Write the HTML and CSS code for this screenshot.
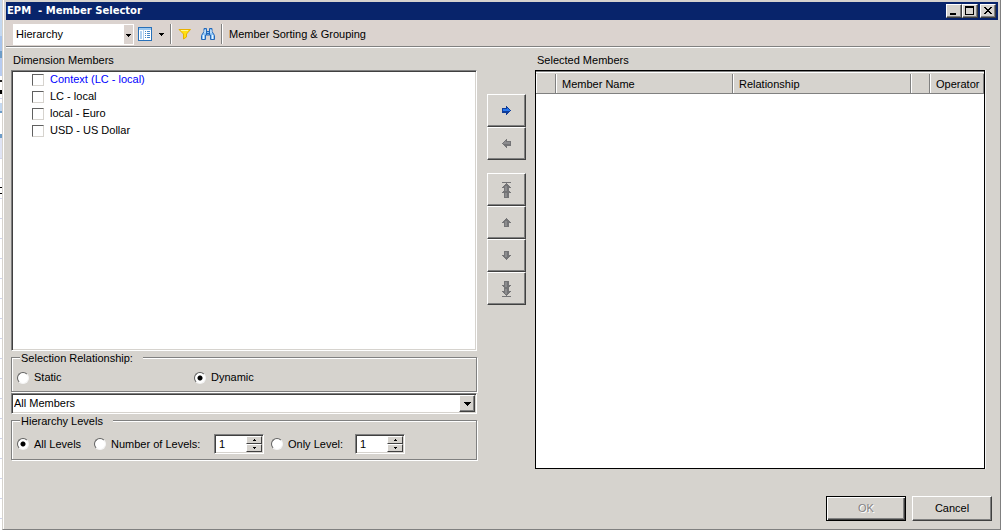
FILE: index.html
```html
<!DOCTYPE html>
<html lang="en">
<head>
<meta charset="utf-8">
<title>EPM - Member Selector</title>
<link rel="stylesheet" href="styles.css">
</head>
<body>
<div class="sheet-edge"></div>
<main class="window">
  <header class="titlebar">
    <h1 class="title">EPM&nbsp; - Member Selector</h1>
    <button class="caption-btn" aria-label="Minimize"><svg width="14" height="12" shape-rendering="crispEdges"><path d="M3 8h6v2H3z"/></svg></button>
    <button class="caption-btn" aria-label="Maximize"><svg width="14" height="12" shape-rendering="crispEdges"><path fill-rule="evenodd" d="M2 1h9v9H2zM3 3v6h7V3z"/></svg></button>
    <button class="caption-btn caption-close" aria-label="Close"><svg width="14" height="12" shape-rendering="crispEdges"><path d="M3 2h2v1h1v1h2V3h1V2h2v1h-1v1H9v1H8v1h1v1h1v1h1v1H9V8H8V7H6v1H5v1H3V8h1V7h1V6h1V5H5V4H4V3H3z"/></svg></button>
  </header>
  <nav class="toolbar" aria-label="Toolbar">
    <div class="view-combo">
      <select class="view-select" aria-label="View"><option>Hierarchy</option></select>
      <svg class="view-arrow" width="9" height="19" shape-rendering="crispEdges"><path d="M2 9h5v1H6v1H5v1H4v-1H3v-1H2z"/></svg>
    </div>
    <button class="tool tool-layout" aria-label="Layout">
      <svg width="14" height="14" shape-rendering="crispEdges"><path fill="#2870b8" d="M0 0h14v14H0z"/><path fill="#9cc8f0" d="M1 1h12v2H1z"/><path fill="#fff" d="M1 3h4v10H1zM5 3h8v10H5z"/><path fill="#b0d0f0" d="M2 4h2v8H2zM5 3h1v10H5z"/><path fill="#4888c8" d="M7 4h1v1H7zM9 4h3v1H9zM7 6h1v1H7zM9 6h3v1H9zM7 8h1v1H7zM9 8h3v1H9zM7 10h1v1H7zM9 10h3v1H9z"/></svg>
      <svg width="5" height="3" shape-rendering="crispEdges"><path d="M0 0h5v1H4v1H3v1H2V2H1V1H0z"/></svg>
    </button>
    <span class="divider"></span>
    <button class="tool" aria-label="Filter"><svg width="14" height="14" viewBox="0 0 14 14"><path fill="#ffe010" stroke="#e8b000" d="M1 2.500h11.500L8.500 7v3L5.500 12V7z"/><path stroke="#fff890" d="M3 3.500h7"/></svg></button>
    <button class="tool tool-find" aria-label="Find"><svg width="14" height="14" viewBox="0 0 14 14"><path fill="#90c4f4" stroke="#2468b8" d="M3 1.500h2.500v3h3v-3H11v3l2.500 4v4h-4V8h-5v4.500h-4v-4l2.500-4z"/><path fill="none" stroke="#2468b8" d="M5.500 4v4M8.500 4v4M6 6.500h2"/><path stroke="#e8f6ff" d="M2.500 8v4M11.500 8v4M4 3v3M10 3v3"/></svg></button>
    <span class="divider"></span>
    <button class="tool tool-text">Member Sorting &amp; Grouping</button>
  </nav>

  <div class="panes">
    <section class="left">
      <h2 class="label">Dimension Members</h2>
      <div class="tree">
        <label class="member member-context"><input class="check" type="checkbox">Context (LC - local)</label>
        <label class="member"><input class="check" type="checkbox">LC - local</label>
        <label class="member"><input class="check" type="checkbox">local - Euro</label>
        <label class="member"><input class="check" type="checkbox">USD - US Dollar</label>
      </div>
      <fieldset class="group group-relation">
        <legend class="legend">Selection Relationship:</legend>
        <label class="option option-static"><input class="radio" type="radio" name="relation">Static</label>
        <label class="option"><input class="radio" type="radio" name="relation" checked>Dynamic</label>
      </fieldset>
      <div class="scope">
        <select class="scope-select" aria-label="Members"><option>All Members</option></select>
        <span class="scope-arrow"><svg width="7" height="4" shape-rendering="crispEdges"><path d="M0 0h7v1H6v1H5v1H4v1H3V3H2V2H1V1H0z"/></svg></span>
      </div>
      <fieldset class="group group-levels">
        <legend class="legend">Hierarchy Levels</legend>
        <label class="option option-all"><input class="radio" type="radio" name="levels" checked>All Levels</label>
        <label class="option option-number"><input class="radio" type="radio" name="levels">Number of Levels:</label>
        <div class="spinner">
          <input class="spin-value" type="text" value="1" aria-label="Number of levels">
          <div class="spin-buttons">
            <button class="spin-btn" type="button" aria-label="Increase"><svg width="3" height="2" shape-rendering="crispEdges"><path d="M1 0h1v1h1v1H0V1h1z"/></svg></button>
            <button class="spin-btn" type="button" aria-label="Decrease"><svg width="3" height="2" shape-rendering="crispEdges"><path d="M0 0h3v1H2v1H1V1H0z"/></svg></button>
          </div>
        </div>
        <label class="option option-only"><input class="radio" type="radio" name="levels">Only Level:</label>
        <div class="spinner">
          <input class="spin-value" type="text" value="1" aria-label="Only level">
          <div class="spin-buttons">
            <button class="spin-btn" type="button" aria-label="Increase"><svg width="3" height="2" shape-rendering="crispEdges"><path d="M1 0h1v1h1v1H0V1h1z"/></svg></button>
            <button class="spin-btn" type="button" aria-label="Decrease"><svg width="3" height="2" shape-rendering="crispEdges"><path d="M0 0h3v1H2v1H1V1H0z"/></svg></button>
          </div>
        </div>
      </fieldset>
    </section>

    <div class="movers">
      <button class="move" aria-label="Add"><svg width="9" height="9" viewBox="0 0 9 9" shape-rendering="crispEdges"><path fill="#103c98" d="M0 2h4V0h1v1h1v1h1v1h1v1h1v1H8v1H7v1H6v1H5v1H4V7H0z"/><path fill="#2878f0" d="M1 3h4V2h1v1h1v1h1v1H1z"/></svg></button>
      <button class="move" aria-label="Remove"><svg width="9" height="9" viewBox="0 0 9 9" shape-rendering="crispEdges"><path fill="#747476" d="M9 2H5V0H4v1H3v1H2v1H1v1H0v1h1v1h1v1h1v1h1v1h1V7h4z"/><path fill="#8c8c8e" d="M8 3H4V2H3v1H2v1H1v1h7z"/></svg></button>
      <button class="move move-gap" aria-label="Move to top"><svg width="9" height="16" viewBox="0 0 9 16" shape-rendering="crispEdges"><path fill="#747476" d="M0 0h9v1H0zM4 1h1v1h1v1h1v1h1v1h1v1H7v3h1v1h1v1H7v5H2v-5H0v-1h1V9h1V6H0V5h1V4h1V3h1V2h1z"/><path fill="#8c8c8e" d="M3 4h2v5H3zM3 11h2v4H3z"/></svg></button>
      <button class="move" aria-label="Move up"><svg width="9" height="9" viewBox="0 0 9 9" shape-rendering="crispEdges"><path fill="#747476" d="M4 0h1v1h1v1h1v1h1v1h1v1H7v4H2V5H0V4h1V3h1V2h1V1h1z"/><path fill="#8c8c8e" d="M3 3h2v5H3z"/></svg></button>
      <button class="move" aria-label="Move down"><svg width="9" height="9" viewBox="0 0 9 9" shape-rendering="crispEdges"><path fill="#747476" d="M2 0h5v4h2v1H8v1H7v1H6v1H5v1H4V8H3V7H2V6H1V5H0V4h2z"/><path fill="#8c8c8e" d="M3 1h2v5H3z"/></svg></button>
      <button class="move" aria-label="Move to bottom"><svg width="9" height="16" viewBox="0 0 9 16" shape-rendering="crispEdges"><path fill="#747476" d="M0 15h9v1H0zM2 0h5v4h2v1H8v1H7v4h2v1H8v1H7v1H6v1H5v1H4v-1H3v-1H2v-1H1v-1H0v-1h2V6H1V5H0V4h2z"/><path fill="#8c8c8e" d="M3 1h2v5H3zM3 8h2v5H3z"/></svg></button>
    </div>

    <section class="right">
      <h2 class="label">Selected Members</h2>
      <div class="grid-frame">
        <table class="grid">
          <colgroup><col class="col-mark"><col class="col-name"><col class="col-relation"><col class="col-flag"><col class="col-operator"></colgroup>
          <thead><tr>
            <th class="head"><span class="cell"></span></th>
            <th class="head"><span class="cell">Member Name</span></th>
            <th class="head"><span class="cell">Relationship</span></th>
            <th class="head"><span class="cell"></span></th>
            <th class="head"><span class="cell cell-last">Operator</span></th>
          </tr></thead>
        </table>
      </div>
    </section>
  </div>

  <footer class="actions">
    <button class="action action-ok" disabled>OK</button>
    <button class="action">Cancel</button>
  </footer>
</main>
</body>
</html>
```
FILE: styles.css
```css
* { box-sizing: border-box; }
body {
  margin: 0;
  min-height: 100vh;
  display: flex;
  font: 11px/15px "Liberation Sans", Arial, sans-serif;
  color: #000;
  background: #d6d3ce;
}
button, input, select { font: inherit; color: inherit; }
button { padding: 0; display: flex; align-items: center; justify-content: center; }
svg { display: block; flex: none; }

.sheet-edge {
  flex: none;
  width: 2px;
  background:
    linear-gradient(#c4d8f0 0 36px, #a8c4ec 36px 51px, #6c9cc8 51px 58px, #b8ccf0 58px 76px, #fff 76px 80px, #222 80px 82px, transparent 82px 90px, #000 90px 94px, transparent 94px 103px, #c4d8f0 103px 111px, #6c9cc8 111px 113px, #fff 113px 134px, #6c9cc8 134px 138px, #e0e4f4 138px 158px, transparent 158px 187px, #000 187px 188px, transparent 188px 193px, #000 193px 194px, transparent 194px) no-repeat,
    repeating-linear-gradient(#fff 0 18px, #d0d4ec 18px 19px, #fff 19px 20px);
}
.window {
  flex: 1;
  min-width: 0;
  display: flex;
  flex-direction: column;
  padding: 2px 2px 8px 2px;
  border: solid;
  border-width: 0 1px 1px;
  border-color: #808080 #808080 #808080 #d6d3ce;
  box-shadow: inset 1px 0 0 #fff;
}
.titlebar {
  display: flex;
  align-items: center;
  height: 18px;
  margin-left: 1px;
  padding-right: 2px;
  background: #08246b;
}
.title {
  flex: 1;
  margin: 0;
  padding-left: 1px;
  font: bold 10px/16px "DejaVu Sans", sans-serif;
  color: #fff;
}
.caption-btn {
  width: 16px;
  height: 14px;
  background: #d6d3ce;
  border: 1px solid;
  border-color: #fff #404040 #404040 #fff;
  box-shadow: inset -1px -1px 0 #808080;
}
.caption-close { margin-left: 2px; }

.toolbar {
  display: flex;
  align-items: center;
  height: 28px;
  margin: 0 8px 0 1px;
  padding: 1px 0 0 7px;
  background: #dbd3cf;
  border-bottom: 1px solid #fff;
  box-shadow: inset 0 -1px 0 #808080;
}
.view-combo { display: flex; position: relative; width: 121px; height: 21px; background: #fff; border: 1px solid #fff; }
.view-select { appearance: none; width: 100%; border: 0; padding: 0 12px 0 2px; background: none; }
.view-arrow { position: absolute; right: 0; top: 0; background: #dbd3cf; pointer-events: none; }
.tool { height: 20px; margin-right: 9px; border: 0; background: none; }
.tool-layout { gap: 7px; margin: 0 6px 0 4px; }
.tool-find { margin-right: 6px; }
.tool-text { margin: 0; padding-left: 6px; }
.divider { width: 2px; height: 20px; margin-right: 6px; border-left: 1px solid #808080; border-right: 1px solid #fff; }
.tool-find + .divider { margin-right: 0; }

.panes {
  flex: 1;
  display: grid;
  grid-template-columns: 466fr 58px 450fr;
  padding: 5px 13px 0 6px;
}
.left, .right { display: flex; flex-direction: column; min-width: 0; }
.label { margin: 0 0 2px; padding-left: 2px; font-size: 11px; line-height: 15px; font-weight: normal; }
.tree {
  flex: 1;
  padding: 0 0 0 19px;
  background: #fff;
  border: 1px solid;
  border-color: #808080 #fff #fff #808080;
  box-shadow: inset 1px 1px 0 #404040, inset -1px -1px 0 #d6d3ce;
}
.member { display: flex; align-items: center; gap: 6px; height: 17px; margin-left: 1px; }
.member-context { color: #0000ff; }
.check {
  appearance: none;
  width: 12px;
  height: 12px;
  margin: 0;
  background: #fff;
  border: 1px solid;
  border-color: #606060 #d6d3ce #d6d3ce #606060;
}

.group {
  display: flex;
  align-items: center;
  min-width: 0;
  margin: 0;
  border: 1px solid #808080;
  box-shadow: 1px 1px 0 #fff, inset 1px 1px 0 #fff;
}
.group-relation { height: 41px; padding: 6px 0 0 5px; margin-bottom: 1px; }
.group-levels { height: 46px; padding: 7px 0 0 5px; }
.legend { margin-left: 3px; padding: 1px 10px 0 1px; line-height: 12px; background: #d6d3ce; }
.option { display: flex; align-items: center; gap: 5px; white-space: nowrap; }
.option-static { width: 177px; }
.option-all { width: 77px; }
.option-number { width: 120px; }
.option-only { width: 84px; margin-left: 7px; }
.radio {
  appearance: none;
  width: 12px;
  height: 12px;
  margin: 0;
  border: 1px solid;
  border-color: #606060 #f4f4f4 #f4f4f4 #606060;
  border-radius: 50%;
  background: #fff;
}
.radio:checked { background: radial-gradient(circle, #000 0 2px, #fff 3px); }

.scope {
  display: flex;
  height: 21px;
  padding: 1px;
  background: #fff;
  border: 1px solid;
  border-color: #808080 #fff #fff #808080;
  box-shadow: inset 1px 1px 0 #404040, inset -1px -1px 0 #d6d3ce;
}
.scope-select { appearance: none; flex: 1; border: 0; padding: 0 1px; background: none; }
.scope-arrow {
  display: flex;
  align-items: center;
  justify-content: center;
  width: 16px;
  background: #d6d3ce;
  border: 1px solid;
  border-color: #fff #404040 #404040 #fff;
  box-shadow: inset -1px -1px 0 #808080;
  pointer-events: none;
}
.spinner {
  display: flex;
  width: 50px;
  height: 20px;
  padding: 1px;
  background: #fff;
  border: 1px solid;
  border-color: #808080 #fff #fff #808080;
  box-shadow: inset 1px 1px 0 #404040, inset -1px -1px 0 #d6d3ce;
}
.spin-value { flex: 1; min-width: 0; border: 0; padding: 0 3px; background: none; }
.spin-buttons { display: grid; grid-template-rows: 1fr 1fr; width: 16px; }
.spin-btn {
  background: #d6d3ce;
  border: 1px solid;
  border-color: #fff #404040 #404040 #fff;
}

.movers { display: flex; flex-direction: column; align-items: center; padding-top: 41px; }
.move {
  width: 39px;
  height: 33px;
  background: #d6d3ce;
  border: 1px solid;
  border-color: #fff #404040 #404040 #fff;
  box-shadow: inset -1px -1px 0 #808080;
}
.move-gap { margin-top: 13px; }

.grid-frame { flex: 1; margin-bottom: -9px; background: #fff; border: 1px solid #000; box-shadow: 1px 0 0 #f4f4f4; }
.grid { width: 100%; table-layout: fixed; border-collapse: collapse; }
.col-mark { width: 20px; }
.col-name { width: 177px; }
.col-flag { width: 19px; }
.col-operator { width: 54px; }
.head {
  height: 23px;
  padding: 2px 0 1px;
  font-weight: normal;
  text-align: left;
  background: #d6d3ce;
  box-shadow: inset 0 1px 0 #808080, inset 0 2px 0 #fff, inset 0 -1px 0 #808080;
}
.cell {
  display: block;
  height: 19px;
  padding-left: 5px;
  line-height: 20px;
  border-left: 1px solid #fff;
  border-right: 1px solid #808080;
}
.actions { display: flex; justify-content: flex-end; gap: 6px; margin-top: 36px; padding-right: 6px; }
.action {
  width: 80px;
  height: 25px;
  background: #d6d3ce;
  border: 1px solid;
  border-color: #fff #404040 #404040 #fff;
  box-shadow: inset -1px -1px 0 #808080;
}
.action-ok {
  color: #848284;
  text-shadow: 1px 1px 0 #fff;
  border-color: #000;
  box-shadow: inset 1px 1px 0 #fff, inset -1px -1px 0 #404040, inset -2px -2px 0 #808080;
}
```
